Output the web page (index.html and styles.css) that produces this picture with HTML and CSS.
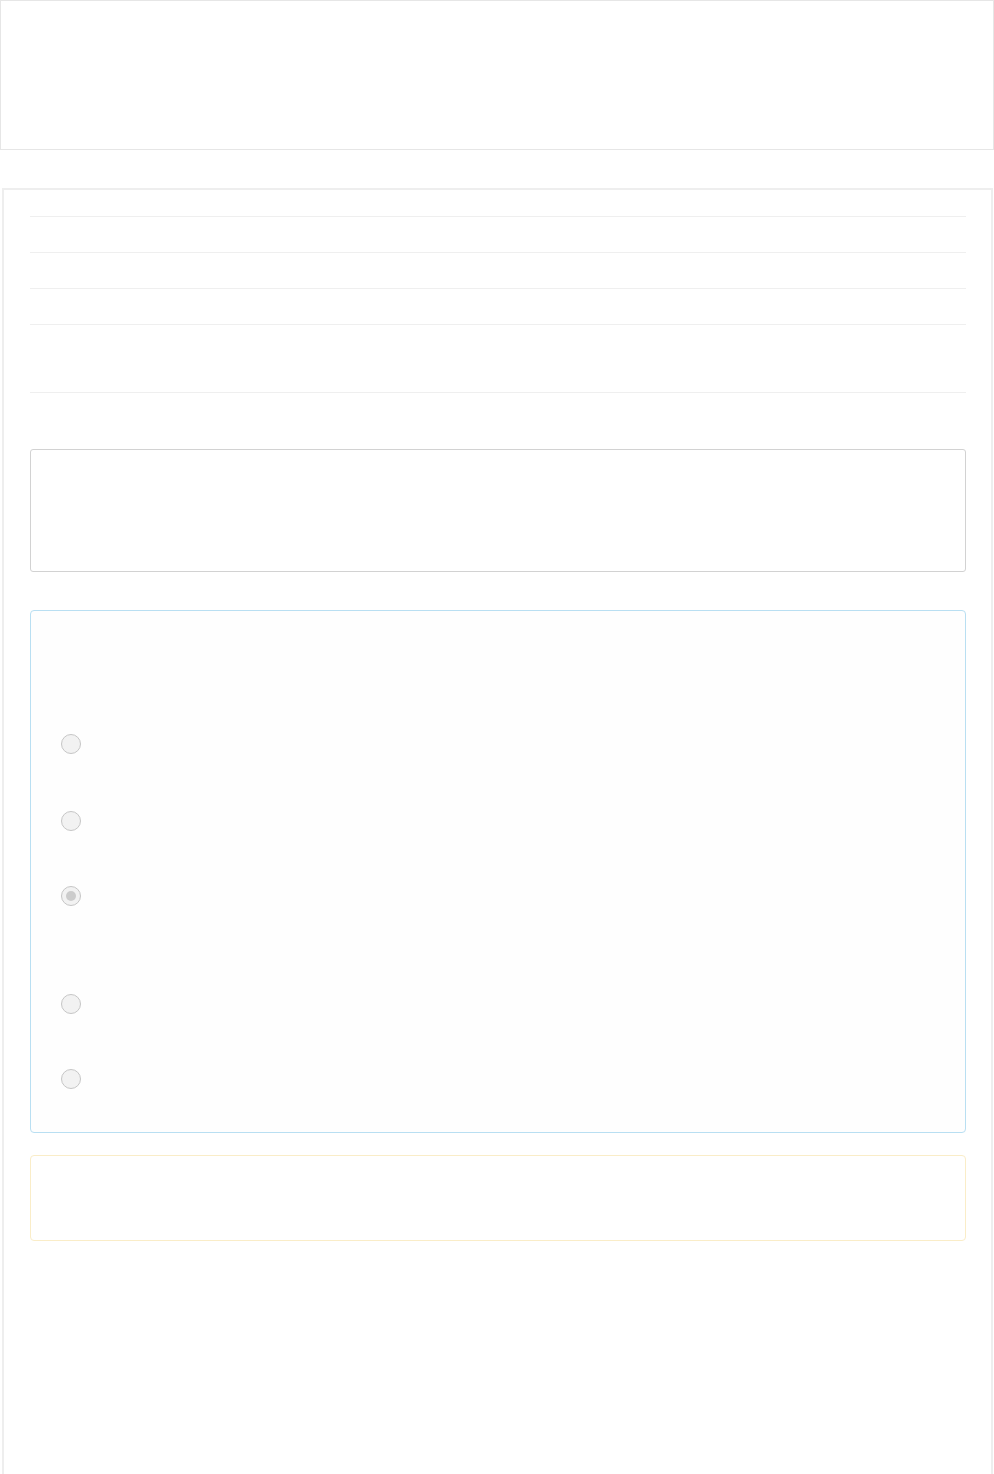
FILE: index.html
```html
<!DOCTYPE html>
<html lang="en">
<head>
<meta charset="utf-8">
<title>Form</title>
<link rel="stylesheet" href="styles.css">
</head>
<body>
<header class="topbar"></header>
<main class="panel">
  <div class="rows">
    <div class="row"></div>
    <div class="row"></div>
    <div class="row"></div>
    <div class="row row-tall"></div>
  </div>
  <div class="box box-plain"></div>
  <div class="box box-info">
    <div class="option opt-1"><span class="radio"></span><span class="label"></span></div>
    <div class="option opt-2"><span class="radio"></span><span class="label"></span></div>
    <div class="option opt-3"><span class="radio checked"></span><span class="label"></span></div>
    <div class="option opt-4"><span class="radio"></span><span class="label"></span></div>
    <div class="option opt-last"><span class="radio"></span><span class="label"></span></div>
  </div>
  <div class="box box-warn"></div>
</main>
</body>
</html>
```
FILE: styles.css
```css
html, body {
  margin: 0;
  padding: 0;
  background: #ffffff;
  font-family: "Liberation Sans", Arial, sans-serif;
}

.topbar {
  display: block;
  box-sizing: border-box;
  width: 994px;
  height: 150px;
  border: 1px solid #e6e6e6;
}

.panel {
  display: flex;
  flex-direction: column;
  box-sizing: border-box;
  width: 991px;
  margin: 38px 0 0 2px;
  border: 2px solid #eeeeee;
  border-bottom: none;
  padding: 26px 25px 240px 26px;
}

.rows {
  display: flex;
  flex-direction: column;
  border-bottom: 1px solid #efefef;
}

.row {
  height: 35px;
  border-top: 1px solid #efefef;
}

.row-tall {
  height: 67px;
}

.box {
  box-sizing: border-box;
  background: #ffffff;
}

.box-plain {
  margin-top: 56px;
  height: 123px;
  border: 1px solid #d2d2d2;
  border-radius: 3px;
}

.box-info {
  margin-top: 38px;
  height: 523px;
  border: 1px solid #b9dff2;
  border-radius: 4px;
  background: #fefefe;
  padding: 123px 0 0 30px;
  display: flex;
  flex-direction: column;
}

.box-warn {
  margin-top: 22px;
  height: 86px;
  border: 1px solid #faedc8;
  border-radius: 4px;
}

.option {
  display: flex;
  align-items: flex-start;
  gap: 12px;
}

.opt-1 { height: 77px; }
.opt-2 { height: 75px; }
.opt-3 { height: 108px; }
.opt-4 { height: 75px; }
.opt-last { height: 20px; }

.radio {
  box-sizing: border-box;
  width: 20px;
  height: 20px;
  border: 1.5px solid #c6c6c6;
  border-radius: 50%;
  background: #f2f2f2;
  display: flex;
  align-items: center;
  justify-content: center;
  flex: none;
}

.radio.checked::after {
  content: "";
  width: 10px;
  height: 10px;
  border-radius: 50%;
  background: #cccccc;
}

.label {
  flex: 1;
}
```
